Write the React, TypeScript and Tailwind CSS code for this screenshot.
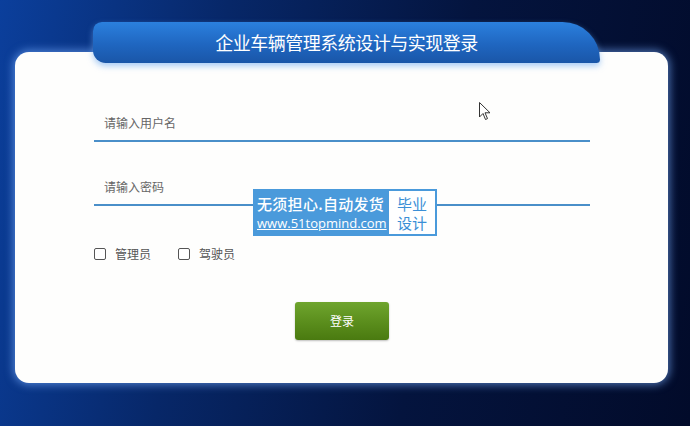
import React from "react";

const cjk = { fontFamily: '"Noto Sans CJK SC", "Noto Sans", sans-serif' };

function Field({ placeholder, type = "text" }: { placeholder: string; type?: string }) {
  return (
    <div className="h-[40px] w-[496px] border-b-2 border-[#4a8fc9] flex items-center pt-[4px]">
      <input
        type={type}
        placeholder={placeholder}
        className="w-full bg-transparent pl-[10px] text-[12px] text-[#555] placeholder:text-[#666] outline-none"
        style={cjk}
      />
    </div>
  );
}

function Check({ label }: { label: string }) {
  return (
    <label className="flex items-center gap-[9px] text-[12px] text-[#555]">
      <span className="w-[12px] h-[12px] border border-[#555] rounded-[2px] bg-white" />
      {label}
    </label>
  );
}

export default function App() {
  return (
    <div
      className="relative w-[690px] h-[426px] overflow-hidden bg-[linear-gradient(100deg,#0b3f9c_0%,#072768_30%,#04143e_62%,#020b2a_100%)] px-[15px] pt-[22px]"
      style={cjk}
    >
      <div className="relative z-10 ml-[78px] w-[507px] h-[41px] rounded-tl-[10px] rounded-tr-[42px] rounded-bl-[14px] rounded-br-[4px] bg-[linear-gradient(180deg,#2b80de_0%,#1f66c0_55%,#1a56a8_100%)] shadow-[0_3px_6px_rgba(110,170,240,0.6)] flex items-center justify-center">
        <span className="text-white text-[18px] tracking-[-0.5px]">企业车辆管理系统设计与实现登录</span>
      </div>
      <div className="-mt-[11px] w-[653px] h-[331px] rounded-[14px] bg-[#fefefd] shadow-[0_0_8px_2px_rgba(120,175,255,0.6)] pl-[79px] pt-[50px]">
        <Field placeholder="请输入用户名" />
        <div className="mt-[24px]">
          <Field placeholder="请输入密码" type="password" />
        </div>
        <div className="mt-[39px] flex items-center gap-[27px]">
          <Check label="管理员" />
          <Check label="驾驶员" />
        </div>
        <div className="mt-[39px] pl-[201px]">
          <button className="w-[94px] h-[38px] rounded-[3px] bg-[linear-gradient(180deg,#6fa52e_0%,#5a8d1c_55%,#4a7a10_100%)] text-white text-[12px] shadow-[0_1px_2px_rgba(0,0,0,0.25)]">
            登录
          </button>
        </div>
      </div>

      <div className="absolute left-[253px] top-[189px] w-[184px] h-[47px] bg-[#4a9adb] flex items-center pl-[4px] pr-[2px]">
        <div className="flex flex-col">
          <span className="text-white text-[15px] font-medium leading-[20px] tracking-[0.3px]">无须担心.自动发货</span>
          <span
            className="text-white text-[13px] leading-[18px] underline"
            style={{ fontFamily: '"Open Sans", "DejaVu Sans", sans-serif' }}
          >
            www.51topmind.com
          </span>
        </div>
        <div className="ml-auto w-[46px] h-[43px] bg-white flex flex-col items-center justify-center text-[#3b8fd6] text-[15px]">
          <span className="leading-[19px]">毕业</span>
          <span className="leading-[19px]">设计</span>
        </div>
      </div>

      <svg className="absolute left-[479px] top-[102px]" width="12" height="19" viewBox="0 0 12 19">
        <path d="M0.5 0.5 L0.5 15 L4 11.5 L6.5 17.5 L8.5 16.6 L6 10.8 L11 10.8 Z" fill="#fff" stroke="#333" strokeWidth="1" />
      </svg>
    </div>
  );
}
